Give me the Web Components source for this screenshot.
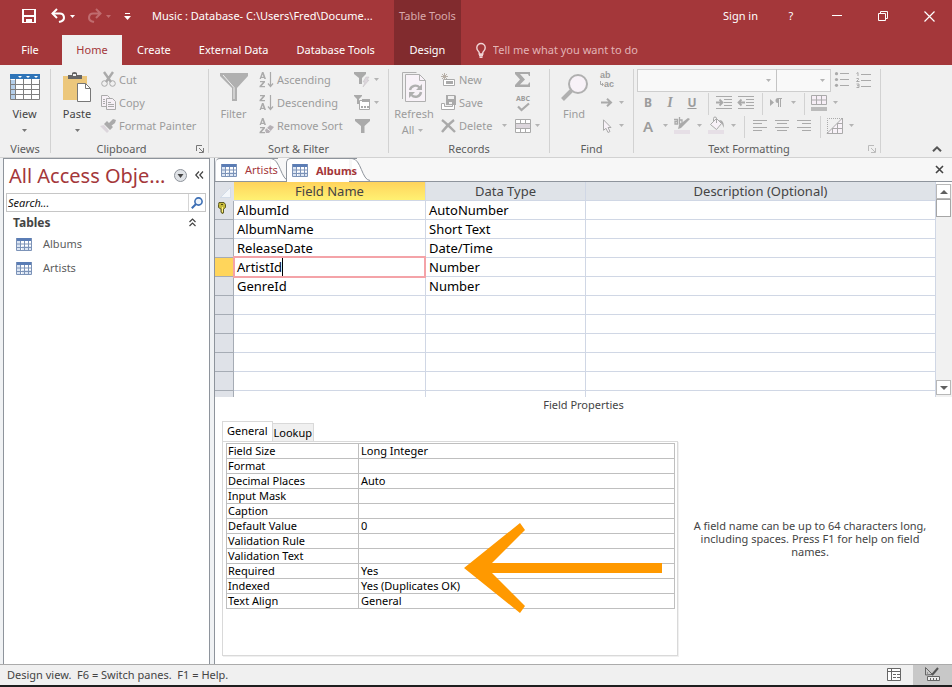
<!DOCTYPE html>
<html lang="en">
<head>
<meta charset="utf-8">
<title>Music : Database</title>
<style>
  html, body { height: 100%; margin: 0; }
  body { font: 11px/16px "Noto Sans", "Open Sans", sans-serif; color: #444; background: #fff; }
</style>
</head>
<body>
<access-app></access-app>

<script>
// [width, height, markup]
const ICONS = {
  save: [14, 14, '<path fill="currentColor" fill-rule="evenodd" d="M0 0h14v14H0zM2 1v5h10V1zM2 8v5h2v-3h6v3h2V8z"/><path fill="currentColor" d="M5 11h2v2H5z"/>'],
  undo: [15, 14, '<path fill="none" stroke="currentColor" stroke-width="2" d="M1.500 4.500H9a4 4 0 0 1 1.500 7.700L8 13"/><path fill="none" stroke="currentColor" stroke-width="2" d="M6 0L1.500 4.500 6 9"/>'],
  redo: [15, 14, '<path fill="none" stroke="currentColor" stroke-width="2" d="M13.500 4.500H6a4 4 0 0 0-1.500 7.700L7 13M9 0l4.500 4.500L9 9"/>'],
  customize: [7, 8, '<path fill="currentColor" d="M1 0h5v1H1zM0 3h7L3.500 7z"/>'],
  caret: [5, 3, '<path fill="currentColor" d="M0 0h5L2.500 3z"/>'],
  minimize: [10, 10, '<path fill="currentColor" d="M0 4h10v1H0z"/>'],
  restore: [10, 10, '<path fill="none" stroke="currentColor" d="M.5 2.500h7v7h-7zM2.500 2V.5h7v7H8"/>'],
  close: [11, 11, '<path fill="none" stroke="currentColor" stroke-width="1.200" d="M.5.5l10 10M10.500.5l-10 10"/>'],
  closeDoc: [9, 9, '<path fill="none" stroke="currentColor" stroke-width="1.600" d="M1 1l7 7M8 1L1 8"/>'],
  bulb: [10, 15, '<path fill="none" stroke="currentColor" stroke-width="1.400" d="M3.200 11V9.500C2.500 8 .8 7.200.8 4.700a4.200 4.200 0 0 1 8.400 0c0 2.500-1.700 3.300-2.400 4.800V11zM3 12.500h4M3.500 14.300h3"/>'],
  view: [30, 26, '<path fill="#fff" d="M0 0h30v26H0z"/><path fill="#2e74b8" d="M0 0h30v5H0z"/><path fill="#b5cfea" d="M1 6h4v19H1z"/><path fill="#fff" d="M8 2h4l-2 2zM16 2h4l-2 2zM24 2h4l-2 2z"/><path fill="none" stroke="#7f7f7f" d="M.5 5.500v20h29v-20M5.500 5v20M13.500 5v20M21.500 5v20M0 10.500h30M0 15.500h30M0 20.500h30"/>'],
  paste: [28, 30, '<path fill="#ecc77c" d="M0 4h24v24H0z"/><path fill="#666" d="M5 3h4V1a3 2 0 0 1 5 0v2h5v4H5z"/><path fill="#f0f0f0" d="M10 2h3v2h-3z"/><path fill="#fff" stroke="#777" d="M14.500 11.500h8l5 5v13h-13z"/><path fill="none" stroke="#777" d="M22.500 11.500v5h5"/>'],
  cut: [15, 15, '<g fill="none" stroke="#aaa"><path stroke-width="2.400" d="M3 0l7 10M12 0L5 10"/><circle cx="3.500" cy="11.500" r="2.800"/><circle cx="11.500" cy="11.500" r="2.800"/></g>'],
  copy: [15, 15, '<g fill="#f6f0f6" stroke="#aaa"><path d="M.5.500h6l2 2v9h-8z"/><path d="M5.500 3.500h6l3 3v8h-9z"/><path d="M2 4.500h2M2 6.500h2M2 8.500h2M7 7.500h3M7 9.500h6M7 11.500h6"/></g>'],
  painter: [16, 14, '<path fill="#dcd6dc" d="M0 7l4-1 5 6-2 2z"/><path fill="#aaa" d="M4 5l3-3 6 6-3 3zM9 4l4-4 3 1-1 3-4 3z"/>'],
  filter: [28, 28, '<path fill="#b0b0b0" d="M0 0h28v3L17 15v13h-5V15L0 3z"/><path fill="none" stroke="#f0f0f0" d="M3 2l11 12.500V26"/>'],
  sortAsc: [15, 16, '<path fill="#aaa" d="M3 0h1.500L7 7H5.300L5 6H2.200L2 7H.5zM3.600 2.500L2.800 4.800h1.700zM1 9h5v1.200L2.800 14H6v1.300H.5v-1.200L3.800 10.300H1z"/><path fill="none" stroke="#aaa" stroke-width="1.200" d="M11.500 0v14M9 11.500l2.500 3 2.500-3"/>'],
  sortDesc: [15, 16, '<path fill="#aaa" d="M1 0h5v1.200L2.800 5H6v1.300H.5V5.100L3.800 1.300H1zM3 8h1.500L7 15H5.300L5 14H2.200L2 15H.5zM3.600 10.500l-.8 2.300h1.700z"/><path fill="none" stroke="#aaa" stroke-width="1.200" d="M11.500 0v14M9 11.500l2.500 3 2.500-3"/>'],
  sortClear: [15, 16, '<path fill="#aaa" d="M3 0h1.500L7 7H5.300L5 6H2.200L2 7H.5zM3.600 2.500L2.800 4.800h1.700zM1 9h5v1.200L2.800 14H6v1.300H.5v-1.200L3.800 10.300H1z"/><path fill="#b5b0b5" d="M6 12l5-5 4 2-5 6H7z"/><path stroke="#f0f0f0" d="M7.500 10l4 3"/>'],
  selection: [16, 15, '<path fill="#aaa" d="M0 0h12v2L8 6v6H5V6L0 2z"/><path fill="#dcd6dc" stroke="#c4c0c4" stroke-width=".5" d="M12 5h3l-2 3h2l-6 7 2-5H9z"/>'],
  advanced: [17, 16, '<path fill="#fff" stroke="#aaa" d="M5.500 5.500h10v9h-10z"/><path fill="#aaa" d="M0 0h8v1L5 4v5H3V4L0 1zM8 4h8v3H8zM7 11h2v2H7zM10 11h2v2h-2zM13 11h2v2h-2z"/>'],
  toggleFilter: [15, 14, '<path fill="#aaa" d="M0 0h15v2L9.500 7v7H6V7L0 2z"/>'],
  refresh: [24, 30, '<path fill="none" stroke="#b0b0b0" d="M.5 27V.5h14"/><path fill="#f8f2f8" stroke="#b0b0b0" d="M3.500 2.500h14l6 6v21h-20z"/><path fill="none" stroke="#b0b0b0" d="M17.500 2.500v6h6"/><g fill="none" stroke="#b0b0b0" stroke-width="2.400"><path d="M8 18a5.500 5.500 0 0 1 9.500-2.500M19 20a5.500 5.500 0 0 1-9.500 3"/></g><path fill="#b0b0b0" d="M20 12v6h-6zM7 26v-6h6z"/>'],
  newRecord: [15, 14, '<path fill="#fff" stroke="#aaa" d="M2.500 6.500h11v6h-11z"/><path fill="#aaa" d="M5 8h7v3H5z"/><path stroke="#b8b0a8" d="M3.500 0v7M0 3.500h7M1 1l5 5M6 1L1 6"/>'],
  saveRecord: [15, 15, '<path fill="#fff" stroke="#aaa" d="M.5 8.500h3v3h8v-2h2v5h-13z"/><path fill="#aaa" fill-rule="evenodd" d="M5 0h9l1 1v9H5zM7 1v3h6V1zM8 7v2h3V7z"/>'],
  remove: [15, 14, '<path fill="none" stroke="#aaa" stroke-width="2.400" d="M1 1c4 3 9 8 13 12M13 1C9 4 4 9 1 13"/>'],
  sigma: [16, 15, '<path fill="#aaa" d="M0 0h15v4h-1l-1-2H5l5 5.500-5 5h8l1-2h1V15H0v-2l5-5.500-5-5.500z"/>'],
  check: [13, 8, '<path fill="none" stroke="#aaa" stroke-width="2.200" d="M1 3.500L4.500 7 12 .5"/>'],
  more: [16, 14, '<path fill="#fff" stroke="#aaa" d="M.5.5h15v13H.5z"/><path fill="#dcd6dc" d="M1 5h14v4H1z"/><path stroke="#aaa" d="M1 4.500h14M1 9.500h14M5.500 0v4M10.500 0v4M5.500 10v4M10.500 10v4"/>'],
  find: [27, 27, '<circle cx="17" cy="10" r="9" fill="#f8f2f8" stroke="#b0b0b0" stroke-width="2"/><path stroke="#b0b0b0" stroke-width="4" d="M10.500 16.500L1.500 25.500"/>'],
  hook: [4, 6, '<path fill="none" stroke="#aaa" d="M.5 0v3.500H3M2 2l1.500 1.500L2 5"/>'],
  goTo: [12, 9, '<path fill="none" stroke="#aaa" stroke-width="2" d="M0 4.500h10M6 .8l4 3.700-4 3.700"/>'],
  pointer: [9, 14, '<path fill="#f8f2f8" stroke="#aaa" d="M.5.800v10.500l2.500-2 2 4.200 2-1-2-4h3z"/>'],
  bullets: [14, 15, '<g fill="#aaa"><circle cx="1.500" cy="1.700" r="1.600"/><circle cx="1.500" cy="7.500" r="1.600"/><circle cx="1.500" cy="13.300" r="1.600"/><path d="M5 1h9v1H5zM5 7h9v1H5zM5 13h9v1H5z"/></g>'],
  numbers: [16, 16, '<g fill="none" stroke="#aaa"><path d="M.5 1.500L2 .5V4M.5 6.500h2v1l-2 2h3M.5 12h2.500v3.500H.5M1 13.700h2"/><path d="M5 2.500h10M5 8.500h10M5 14.500h10"/></g>'],
  indent: [16, 14, '<path stroke="#aaa" d="M0 .5h16M0 12.500h16M8 3.500h8M8 6.500h8M8 9.500h8"/><path fill="none" stroke="#aaa" stroke-width="1.800" d="M0 6.500h6M3.500 3.500l3 3-3 3"/>'],
  outdent: [16, 14, '<path stroke="#aaa" d="M0 .5h16M0 12.500h16M8 3.500h8M8 6.500h8M8 9.500h8"/><path fill="none" stroke="#aaa" stroke-width="1.800" d="M7 6.500H1M3.500 3.500l-3 3 3 3"/>'],
  direction: [14, 10, '<path fill="#aaa" d="M0 1l4 3.500L0 8zM12 0v1h-1v8h-1V1H9v8H8V5a2.500 2.500 0 0 1 0-5z"/>'],
  gridlines: [16, 16, '<path fill="#f6eef6" stroke="#aaa" d="M.5.5h15v9H.5zM0 5h16M5.500 0v9M10.500 0v9"/><path fill="#bbb" d="M0 12h16v4H0z"/>'],
  highlight: [17, 17, '<path fill="#e6dfe6" d="M0 13h16v4H0z"/><path fill="#aaa" d="M4 12l1-4L14 1l2 1-9 9z"/><g fill="none" stroke="#aaa" stroke-width="1.300"><path d="M0 2.500h3.500V7H1V4.500h2.500M5.500 0v7H8V3H6"/></g>'],
  fill: [17, 17, '<path fill="#e6dfe6" d="M0 13h16v4H0z"/><path fill="#f8f2f8" stroke="#aaa" d="M2.500 7.500l6-6 5 5-5 6z"/><path fill="none" stroke="#aaa" d="M5.500 5V1.500a1.500 1.500 0 0 1 3 0V6"/><path fill="#aaa" d="M11 3c4 0 5 3 5 8l-2-4z"/>'],
  left: [14, 12, '<path stroke="#aaa" d="M0 .5h14M0 3.500h9M0 7.500h14M0 10.500h9"/>'],
  center: [14, 12, '<path stroke="#aaa" d="M0 .5h14M2 3.500h10M0 7.500h14M2 10.500h10"/>'],
  right: [14, 12, '<path stroke="#aaa" d="M0 .5h14M5 3.500h9M0 7.500h14M5 10.500h9"/>'],
  altFill: [16, 16, '<path fill="#f8f2f8" stroke="#aaa" d="M15.500 0v15.500H0zM5.500 10v5M10.500 5v10M5 10.500h10M10 5.500h5"/><path fill="none" stroke="#aaa" stroke-dasharray="1 1" d="M.5 15V.5H15"/>'],
  launcher: [8, 8, '<path fill="none" stroke="currentColor" d="M.5 6V.5H6M3 3l4 4M7.500 3v4.500H3"/>'],
  chevronUp: [10, 6, '<path fill="none" stroke="#555" stroke-width="2" d="M1 5.300l4-4 4 4"/>'],
  round: [13, 13, '<circle cx="6.500" cy="6.500" r="6" fill="#dfe2e6" stroke="#8f949c"/><path fill="#444" d="M3.500 5h6l-3 4z"/>'],
  shutter: [9, 8, '<path fill="none" stroke="#444" stroke-width="1.200" d="M4 .5L.8 4 4 7.500M8 .5L4.800 4 8 7.500"/>'],
  collapse: [7, 9, '<path fill="none" stroke="#444" stroke-width="1.200" d="M.5 4l3-3 3 3M.5 8l3-3 3 3"/>'],
  search: [12, 12, '<circle cx="7.500" cy="4.500" r="3.600" fill="#eef4fb" stroke="#3c6eb4" stroke-width="1.600"/><path stroke="#3c6eb4" stroke-width="2" d="M5 7L.8 11.200"/>'],
  table: [16, 13, '<path fill="#fff" d="M0 0h16v13H0z"/><path fill="#5b7db5" d="M0 0h16v3H0z"/><path fill="#dbe5f3" d="M1 3h3v9H1zM6 8h9v4H6z"/><path fill="none" stroke="#7c93b8" d="M.5 0v12.500h15V0M4.500 3v10M8.500 3v10M12.500 3v10M0 6h16M0 9.500h16"/>'],
  key: [8, 12, '<path fill="#c5b93c" stroke="#5d5a27" d="M1 .5h5l1.500 2v3L5.500 7v4L4 11.500 3 10V7L.5 5.500v-3z"/><path fill="#4d4a17" d="M3 2h2v1H3z"/><path stroke="#fff08a" d="M4.500 5v5"/>'],
  corner: [11, 11, '<path fill="#f3f6fa" stroke="#c5d2e2" stroke-width=".6" d="M10.500.5v10H.5z"/>'],
  triUp: [8, 4, '<path fill="#606060" d="M0 4h8L4 0z"/>'],
  triDown: [8, 4, '<path fill="#606060" d="M0 0h8L4 4z"/>'],
  datasheet: [14, 13, '<path fill="#fff" stroke="#666" d="M.5.5h13v12H.5zM0 3.500h14M4.500 0v13"/><path stroke="#666" stroke-dasharray="3 1" d="M6 6.500h7M6 9.500h7"/>'],
  design: [15, 14, '<path fill="none" stroke="#666" d="M.5 8V.5l7 7zM2.500 5.500v1"/><path fill="none" stroke="#555" stroke-width="2" d="M7 8l6-7"/><path fill="#eee" stroke="#666" d="M2.500 9.500h12v4h-12zM5.500 11v2M8.500 11v2M11.500 11v2"/>'],
  arrow: [198, 90, '<path fill="#f90" d="M0 45L56 0l5 7-33 33h170v10H28l33 33-5 7z"/>'],
  tabSlope: [18, 23, '<path fill="#fff" d="M0 0C9 0 10 23 18 23H0z"/><path fill="none" stroke="#8e949c" d="M0 .5c9 0 10 22 18 22"/>']
}

const define = (name, html, setup) => {
  const template = document.createElement('template')
  template.innerHTML = html
  customElements.define(name, class extends HTMLElement {
    constructor () {
      super()
      this.attachShadow({ mode: 'open' }).append(template.content.cloneNode(true))
    }

    connectedCallback () {
      if (setup) setup(this, this.shadowRoot)
    }
  })
}

const icon = name => `<ui-icon name="${name}"></ui-icon>`

define('ui-icon', `
  <style>
    :host { display: inline-flex; flex: none; }
    svg { display: block; overflow: visible; }
  </style>
  <span></span>
`, (el, root) => {
  const [w, h, markup] = ICONS[el.getAttribute('name')]
  root.querySelector('span').innerHTML =
    `<svg width="${w}" height="${h}" viewBox="0 0 ${w} ${h}" aria-hidden="true">${markup}</svg>`
})

/* ---------- ribbon ---------- */

// attributes: icon, label, size (large | small | tool), drop, line2, off
define('ribbon-button', `
  <style>
    :host { display: block; flex: none; }
    button { display: flex; align-items: center; box-sizing: border-box; width: 100%; height: 23px; margin: 0; padding: 0 0 2px;
      border: 0; background: none; font: inherit; color: #444; white-space: nowrap; }
    button:disabled { color: #9c9c9c; }
    .icon { display: flex; flex-direction: column; align-items: center; justify-content: center; width: 16px; line-height: 8px; }
    .drop { display: flex; align-items: center; justify-content: center; width: 12px; color: #777; }
    :disabled .drop { color: #b4b4b4; }
    .label:empty { display: none; }
    .small .label { margin-left: 3px; }
    .push .label { flex: 1; text-align: left; }
    .tool { justify-content: center; }
    .tool .icon { flex: 1; }
    .large { flex-direction: column; height: 69px; padding: 3px 0 0; }
    .large .icon { height: 30px; width: auto; margin-bottom: 4px; }
    .large .line2 { display: flex; height: 16px; align-items: center; }
  </style>
  <button type="button"><span class="icon"><slot></slot></span><span class="label"></span></button>
`, (el, root) => {
  const button = root.querySelector('button')
  const size = el.getAttribute('size') || 'small'
  button.className = size + (el.hasAttribute('push') ? ' push' : '')
  button.disabled = el.hasAttribute('off')
  root.querySelector('.label').textContent = el.getAttribute('label') || ''
  if (el.hasAttribute('aria-label')) button.setAttribute('aria-label', el.getAttribute('aria-label'))
  if (el.hasAttribute('icon')) root.querySelector('.icon').innerHTML = icon(el.getAttribute('icon'))
  const drop = el.hasAttribute('drop') ? `<span class="drop">${icon('caret')}</span>` : ''
  if (size === 'large') {
    button.insertAdjacentHTML('beforeend', `<span class="line2">${el.getAttribute('line2') || ''}${drop}</span>`)
  } else {
    button.insertAdjacentHTML('beforeend', drop)
  }
})

define('ribbon-group', `
  <style>
    :host { display: flex; flex-direction: column; flex: none;
      background: linear-gradient(#d2d2d2, #d2d2d2) right top / 1px 84px no-repeat; }
    .body { display: flex; height: 69px; }
    footer { display: flex; padding: 3px 1px 0 0; height: 16px; color: #5c5c5c; }
    .name { flex: 1; text-align: center; }
    button { display: flex; align-items: center; justify-content: center; width: 16px; padding: 0; border: 0;
      background: none; color: #777; }
    button:disabled { color: #bbb; }
  </style>
  <div class="body"><slot></slot></div>
  <footer><span class="name"></span></footer>
`, (el, root) => {
  root.querySelector('.name').textContent = el.getAttribute('label')
  const launcher = el.getAttribute('launcher')
  if (launcher) {
    root.querySelector('footer').insertAdjacentHTML('beforeend',
      `<button type="button" aria-label="${el.getAttribute('label')} options" ${launcher === 'off' ? 'disabled' : ''}>${icon('launcher')}</button>`)
  }
})

define('font-toolbar', `
  <style>
    :host { display: block; }
    .row { display: flex; align-items: center; height: 23px; padding-left: 3px; }
    .row:first-child { padding-left: 5px; }
    .combo { display: flex; align-items: center; position: relative; }
    .combo + .combo { margin-left: -1px; }
    select { appearance: none; box-sizing: border-box; width: 140px; height: 23px; border: 1px solid #c0c0c0;
      border-radius: 0; background: #fdfdfd; }
    .combo + .combo select { width: 55px; }
    .combo ui-icon { position: absolute; right: 6px; color: #b4b4b4; }
    ribbon-button { width: 22px; }
    ribbon-button[drop] { width: 34px; }
    ribbon-button.tight { width: 32px; }
    i.sep { width: 1px; height: 22px; margin: 0 4px 0 5px; background: #d2d2d2; }
    b, em, u { font-size: 12px; font-weight: 700; line-height: 16px; }
    .a { font-size: 15px; line-height: 18px; font-weight: 600; }
    em { font-family: "Liberation Serif", serif; font-size: 14px; }
  </style>
  <div class="row">
    <span class="combo"><select aria-label="Font" disabled></select>${icon('caret')}</span>
    <span class="combo"><select aria-label="Font size" disabled></select>${icon('caret')}</span>
    <ribbon-button size="tool" off icon="bullets" aria-label="Bullets"></ribbon-button>
    <ribbon-button size="tool" off icon="numbers" aria-label="Numbering"></ribbon-button>
  </div>
  <div class="row">
    <ribbon-button size="tool" off aria-label="Bold"><b>B</b></ribbon-button>
    <ribbon-button size="tool" off aria-label="Italic"><em>I</em></ribbon-button>
    <ribbon-button size="tool" off aria-label="Underline"><u>U</u></ribbon-button>
    <i class="sep"></i>
    <ribbon-button size="tool" off icon="indent" aria-label="Increase indent"></ribbon-button>
    <ribbon-button size="tool" off icon="outdent" aria-label="Decrease indent"></ribbon-button>
    <i class="sep"></i>
    <ribbon-button class="tight" size="tool" off drop icon="direction" aria-label="Text direction"></ribbon-button>
    <i class="sep"></i>
    <ribbon-button class="tight" size="tool" off drop icon="gridlines" aria-label="Gridlines"></ribbon-button>
  </div>
  <div class="row">
    <ribbon-button size="tool" off drop aria-label="Font color"><span class="a">A</span></ribbon-button>
    <ribbon-button size="tool" off drop icon="highlight" aria-label="Highlight"></ribbon-button>
    <ribbon-button size="tool" off drop icon="fill" aria-label="Background color"></ribbon-button>
    <i class="sep"></i>
    <ribbon-button size="tool" off icon="left" aria-label="Align left"></ribbon-button>
    <ribbon-button size="tool" off icon="center" aria-label="Center"></ribbon-button>
    <ribbon-button size="tool" off icon="right" aria-label="Align right"></ribbon-button>
    <i class="sep"></i>
    <ribbon-button class="tight" size="tool" off drop icon="altFill" aria-label="Alternate row color"></ribbon-button>
  </div>
`)

define('ribbon-bar', `
  <style>
    :host { display: flex; padding-top: 4px; background: #f0f0f0; border-bottom: 1px solid #d2d2d2; }
    .col { display: flex; flex-direction: column; }
    .views { width: 51px; }
    .clip { width: 158px; }
    .sort { width: 180px; }
    .records { width: 161px; }
    .find { width: 84px; }
    .text { width: 247px; }
    .clip [size=large] { width: 42px; margin-left: 5px; }
    .clip .col { margin-left: 2px; }
    .views [size=large] { width: 49px; }
    .sort [size=large] { width: 49px; }
    .sort .col + .col { margin-left: auto; padding-right: 7px; }
    .records [size=large] { width: 50px; }
    .records .col { width: 70px; margin-left: 1px; }
    .records .col + .col { width: auto; margin-left: 5px; }
    .find [size=large] { width: 48px; }
    .find .col { margin-left: 1px; }
    .abc { font-size: 7px; font-weight: 700; }
    .swap { display: flex; flex-direction: column; font: 700 9px/8px "Liberation Sans", sans-serif; }
    .swap span { display: flex; align-items: center; height: 9px; }
    .up { display: flex; flex: 1; align-items: flex-end; justify-content: flex-end; }
    .up button { display: flex; align-items: center; justify-content: center; width: 30px; height: 16px; padding: 0;
      border: 0; background: none; }
  </style>
  <ribbon-group class="views" label="Views">
    <ribbon-button size="large" label="View" icon="view" drop></ribbon-button>
  </ribbon-group>
  <ribbon-group class="clip" label="Clipboard" launcher="on">
    <ribbon-button size="large" label="Paste" icon="paste" drop></ribbon-button>
    <div class="col">
      <ribbon-button label="Cut" icon="cut" off></ribbon-button>
      <ribbon-button label="Copy" icon="copy" off></ribbon-button>
      <ribbon-button label="Format Painter" icon="painter" off></ribbon-button>
    </div>
  </ribbon-group>
  <ribbon-group class="sort" label="Sort &amp; Filter">
    <ribbon-button size="large" label="Filter" icon="filter" off></ribbon-button>
    <div class="col">
      <ribbon-button label="Ascending" icon="sortAsc" off></ribbon-button>
      <ribbon-button label="Descending" icon="sortDesc" off></ribbon-button>
      <ribbon-button label="Remove Sort" icon="sortClear" off></ribbon-button>
    </div>
    <div class="col">
      <ribbon-button icon="selection" drop off aria-label="Selection"></ribbon-button>
      <ribbon-button icon="advanced" drop off aria-label="Advanced"></ribbon-button>
      <ribbon-button icon="toggleFilter" off aria-label="Toggle filter"></ribbon-button>
    </div>
  </ribbon-group>
  <ribbon-group class="records" label="Records">
    <ribbon-button size="large" label="Refresh" line2="All" icon="refresh" drop off></ribbon-button>
    <div class="col">
      <ribbon-button label="New" icon="newRecord" off></ribbon-button>
      <ribbon-button label="Save" icon="saveRecord" off></ribbon-button>
      <ribbon-button label="Delete" icon="remove" drop push off></ribbon-button>
    </div>
    <div class="col">
      <ribbon-button icon="sigma" off aria-label="Totals"></ribbon-button>
      <ribbon-button off aria-label="Spelling"><span class="abc">ABC</span>${icon('check')}</ribbon-button>
      <ribbon-button icon="more" drop off aria-label="More"></ribbon-button>
    </div>
  </ribbon-group>
  <ribbon-group class="find" label="Find">
    <ribbon-button size="large" label="Find" icon="find" off></ribbon-button>
    <div class="col">
      <ribbon-button off aria-label="Replace"><span class="swap"><span>ab</span><span>${icon('hook')}ac</span></span></ribbon-button>
      <ribbon-button icon="goTo" drop off aria-label="Go to"></ribbon-button>
      <ribbon-button icon="pointer" drop off aria-label="Select"></ribbon-button>
    </div>
  </ribbon-group>
  <ribbon-group class="text" label="Text Formatting" launcher="off">
    <font-toolbar></font-toolbar>
  </ribbon-group>
  <div class="up"><button type="button" aria-label="Collapse the ribbon">${icon('chevronUp')}</button></div>
`)

/* ---------- title bar and ribbon tabs ---------- */

define('title-bar', `
  <style>
    :host { display: grid; grid-template: 35px 30px / 394px auto 1fr; background: #a4373a; color: #fff; }
    button { display: flex; align-items: center; justify-content: center; margin: 0; padding: 0; border: 0;
      background: none; color: inherit; font: inherit; white-space: nowrap; }
    .quick, .tabs, .window, .tell { display: flex; align-items: center; }
    .quick, .window { padding-bottom: 3px; }
    .quick { padding-left: 18px; }
    .quick button { width: 22px; height: 24px; }
    .quick .drop { width: 8px; }
    .quick .undo, .quick .redo { margin-left: 8px; width: 20px; }
    .quick .faded { color: #c06c6f; }
    .quick .more { margin: 2px 0 0 4px; }
    h1 { margin: 0 0 0 14px; font: inherit; }
    .context { display: flex; align-items: center; justify-content: center; padding: 0 5px 3px; background: #812b2e; color: #d8a9ab; }
    .tabs { gap: 2px; align-items: stretch; }
    .tabs button { padding: 0 13px; }
    .tabs .file { width: 60px; }
    .tabs .active { background: #f0f0f0; color: #a4373a; width: 60px; }
    .design { background: #812b2e; }
    .window { justify-content: flex-end; }
    .window button { width: 46px; height: 32px; }
    .window .sign { width: auto; margin-right: 10px; }
    .tell { gap: 7px; padding-left: 15px; color: #f0d4d5; }
    input { flex: 1; max-width: 300px; padding: 0; border: 0; outline: 0; background: none; font: inherit; color: #fff; }
    input::placeholder { color: #e2b4b6; opacity: 1; }
  </style>
  <div class="quick">
    <button type="button" aria-label="Save">${icon('save')}</button>
    <button type="button" class="undo" aria-label="Undo">${icon('undo')}</button>
    <button type="button" class="drop" aria-label="Undo list">${icon('caret')}</button>
    <button type="button" class="redo faded" aria-label="Redo">${icon('redo')}</button>
    <button type="button" class="drop faded" aria-label="Redo list">${icon('caret')}</button>
    <button type="button" class="more" aria-label="Customize toolbar">${icon('customize')}</button>
    <h1>Music : Database- C:\\Users\\Fred\\Docume...</h1>
  </div>
  <div class="context">Table Tools</div>
  <div class="window">
    <button type="button" class="sign">Sign in</button>
    <button type="button">?</button>
    <button type="button" aria-label="Minimize">${icon('minimize')}</button>
    <button type="button" aria-label="Restore">${icon('restore')}</button>
    <button type="button" aria-label="Close">${icon('close')}</button>
  </div>
  <nav class="tabs">
    <button type="button" class="file">File</button>
    <button type="button" class="active">Home</button>
    <button type="button">Create</button>
    <button type="button">External Data</button>
    <button type="button">Database Tools</button>
  </nav>
  <button type="button" class="design">Design</button>
  <label class="tell">${icon('bulb')}<input type="text" aria-label="Tell me what you want to do" placeholder="Tell me what you want to do"></label>
`)

/* ---------- navigation pane ---------- */

define('nav-item', `
  <style>
    :host { display: block; }
    a { display: flex; align-items: center; gap: 11px; height: 24px; padding-left: 12px; color: #5c5c5c; text-decoration: none; }
  </style>
  <a href="#">${icon('table')}<slot></slot></a>
`)

define('nav-pane', `
  <style>
    :host { display: block; width: 205px; margin-left: 3px; border: solid #8e949c; border-width: 1px 1px 0; background: #fff; }
    header { display: flex; align-items: center; height: 34px; padding: 0 0 0 5px; }
    h2 { flex: 1; margin: 0; font-size: 20px; font-weight: 400; line-height: 36px; color: #a4373a; white-space: nowrap; }
    h3 { flex: 1; margin: 0; font-size: 12px; line-height: 18px; color: #444; }
    button { display: flex; align-items: center; justify-content: center; width: 19px; height: 18px; padding: 0 0 2px; border: 0; background: none; }
    .search { display: flex; margin: 0 3px 1px 2px; border: 1px solid #c6c6c6; }
    .search button { border-left: 1px solid #d5d5d5; width: 17px; height: 17px; padding: 0; }
    input { flex: 1; min-width: 0; padding: 0 1px; border: 0; outline: 0; font: inherit; font-style: italic; }
    input::placeholder { color: #111; opacity: 1; }
    .group { display: flex; align-items: center; height: 19px; padding: 0 7px 0 9px; }
    .group button { padding: 0; }
  </style>
  <header><h2>All Access Obje...</h2>
    <button type="button" aria-label="Choose category">${icon('round')}</button>
    <button type="button" aria-label="Close pane">${icon('shutter')}</button>
  </header>
  <div class="search">
    <input type="text" aria-label="Search" placeholder="Search...">
    <button type="button" aria-label="Search">${icon('search')}</button>
  </div>
  <div class="group"><h3>Tables</h3><button type="button" aria-label="Collapse tables">${icon('collapse')}</button></div>
  <nav><slot></slot></nav>
`)

/* ---------- document area ---------- */

define('doc-tabs', `
  <style>
    :host { display: flex; box-sizing: border-box; height: 24px; background: #f7f7f7; border-bottom: 1px solid #8e949c; }
    button { display: flex; height: 23px; margin: 0; padding: 0; border: 0; background: none; font: inherit; color: #a4373a; isolation: isolate; }
    .face { display: flex; align-items: center; gap: 8px; box-sizing: border-box; height: 23px; padding-left: 5px;
      border: solid #8e949c; border-width: 1px 0 0 1px; border-radius: 5px 0 0 0;
      background: linear-gradient(#fff, #fff) 0 0 / calc(100% - 8px) 100% no-repeat; }
    .back .face { border-left-color: #d0d4da; }
    .front { position: relative; height: 24px; margin-left: -3px; font-weight: 700; }
    .front .face { height: 24px; }
    button > ui-icon { z-index: -1; }
    .back > ui-icon { margin-left: -7px; }
    .front > ui-icon { margin-left: -5px; }
    .close { margin: 0 0 0 auto; width: 25px; align-items: center; justify-content: center; color: #444; }
  </style>
  <button type="button" class="back"><span class="face">${icon('table')}Artists</span>${icon('tabSlope')}</button>
  <button type="button" class="front"><span class="face">${icon('table')}Albums</span>${icon('tabSlope')}</button>
  <button type="button" class="close" aria-label="Close table">${icon('closeDoc')}</button>
`)

define('field-grid', `
  <style>
    :host { display: flex; overflow: hidden; color: #000; font-size: 13px; }
    .sheet { flex: 1; min-width: 0; }
    table { width: 100%; table-layout: fixed; border-spacing: 0; }
    col.mark { width: 19px; }
    col.name { width: 192px; }
    col.type { width: 160px; }
    th, td { box-sizing: border-box; height: 19px; padding: 0 3px; border: solid #d0d7e5; border-width: 0 1px 1px 0;
      line-height: 18px; font-weight: 400; text-align: left; white-space: nowrap; }
    thead th { background: #dfe3e8; color: #444; text-align: center; }
    thead th.current { background: linear-gradient(#ffd35c, #fff172); }
    tbody th, thead th:first-child { padding: 0; background: #dfe2e8; border-color: #a6acb5; }
    thead th:first-child { border-bottom-color: #dfe2e8; border-right-color: #dfe2e8; }
    th ui-icon { display: flex; justify-content: center; }
    thead th ui-icon { margin-top: 3px; margin-left: 2px; }
    tbody th ui-icon { margin: 0 4px 4px 0; }
    .active th { background: #ffd55b; }
    .active .edit { position: relative; }
    .edit::after { content: ""; position: absolute; inset: -2px -1px -2px -1px; border: 2px solid #f4a3a8; pointer-events: none; }
    .edit span { display: inline-block; height: 18px; border-right: 1px solid #000; vertical-align: top; outline: 0; }
    .scroll { display: flex; flex-direction: column; width: 16px; margin-top: 2px; background: #f1f1f1; }
    .scroll button { display: flex; align-items: center; justify-content: center; flex: none; box-sizing: border-box; width: 15px; height: 15px;
      padding: 0; border: 1px solid #b8b8b8; background: #fff; }
    .scroll .thumb { height: 18px; border-color: #a6a6a6; }
    .scroll .down { margin: auto 0 2px; }
  </style>
  <div class="sheet">
    <table>
      <colgroup><col class="mark"><col class="name"><col class="type"><col></colgroup>
      <thead><tr><th>${icon('corner')}</th><th class="current">Field Name</th><th>Data Type</th><th>Description (Optional)</th></tr></thead>
      <tbody></tbody>
    </table>
  </div>
  <div class="scroll">
    <button type="button" aria-label="Scroll up">${icon('triUp')}</button>
    <button type="button" class="thumb" aria-label="Scroll position"></button>
    <button type="button" class="down" aria-label="Scroll down">${icon('triDown')}</button>
  </div>
`, (el, root) => {
  const fields = [
    ['AlbumId', 'AutoNumber'],
    ['AlbumName', 'Short Text'],
    ['ReleaseDate', 'Date/Time'],
    ['ArtistId', 'Number'],
    ['GenreId', 'Number']
  ]
  let rows = ''
  for (let i = 0; i < 11; i++) {
    const [name, type] = fields[i] || ['', '']
    const active = name === 'ArtistId'
    rows += `<tr${active ? ' class="active"' : ''}><th>${i === 0 ? icon('key') : ''}</th>` +
      (active ? `<td class="edit"><span contenteditable="true" role="textbox" spellcheck="false" aria-label="Field name">${name}</span></td>` : `<td>${name}</td>`) +
      `<td>${type}</td><td></td></tr>`
  }
  root.querySelector('tbody').innerHTML = rows
})

define('field-properties', `
  <style>
    :host { display: flex; flex-direction: column; background: #fff; color: #000; }
    h2 { margin: 0 0 8px; font: inherit; color: #444; text-align: center; }
    .body { display: flex; flex: 1; margin: 0 0 8px 7px; }
    .pane { display: flex; flex-direction: column; flex: 0 0 456px; }
    .tabs { display: flex; align-items: flex-end; height: 20px; }
    .tabs button { box-sizing: border-box; height: 18px; padding: 0 1px; border: 1px solid #d9d9d9; border-width: 1px 1px 0 0; background: #f0f0f0;
      font: inherit; color: #000; }
    .tabs .on { height: 21px; margin-bottom: -1px; padding: 0 4px 2px; border-left-width: 1px; background: #fff; position: relative; }
    .sheet { position: relative; flex: 1; padding: 1px 2px 1px 3px; border: 1px solid #d9d9d9; box-shadow: 1px 1px #f0f0f0; }
    table { width: 100%; border-collapse: collapse; table-layout: fixed; }
    th, td { box-sizing: border-box; height: 15px; padding: 0 2px; border: 1px solid #bfbfbf; line-height: 14px; font-weight: 400; text-align: left; }
    th { width: 132px; padding: 0 1px; }
    .arrow { position: absolute; left: 53%; top: 81px; }
    p { flex: 1; align-self: center; margin: 0; padding: 0 20px 0 10px; line-height: 13px; color: #444; text-align: center; }
  </style>
  <h2>Field Properties</h2>
  <div class="body">
    <div class="pane">
      <div class="tabs"><button type="button" class="on">General</button><button type="button">Lookup</button></div>
      <div class="sheet"><table><tbody></tbody></table><span class="arrow">${icon('arrow')}</span></div>
    </div>
    <p>A field name can be up to 64 characters long, including spaces. Press F1 for help on field names.</p>
  </div>
`, (el, root) => {
  const props = {
    'Field Size': 'Long Integer',
    'Format': '',
    'Decimal Places': 'Auto',
    'Input Mask': '',
    'Caption': '',
    'Default Value': '0',
    'Validation Rule': '',
    'Validation Text': '',
    'Required': 'Yes',
    'Indexed': 'Yes (Duplicates OK)',
    'Text Align': 'General'
  }
  root.querySelector('tbody').innerHTML = Object.entries(props)
    .map(([name, value]) => `<tr><th scope="row">${name}</th><td>${value}</td></tr>`).join('')
})

define('status-bar', `
  <style>
    :host { display: flex; align-items: center; height: 20px; background: #f0f0f0; border-top: 1px solid #ababab; border-bottom: 2px solid #1e1e1e; }
    span { flex: 1; padding-left: 7px; white-space: pre; color: #444; }
    button { display: flex; align-items: center; justify-content: center; width: 39px; height: 20px; padding: 0 0 2px; border: 0; background: none; }
    .on { background: #c8c8c8; }
  </style>
  <span>Design view.  F6 = Switch panes.  F1 = Help.</span>
  <button type="button" aria-label="Datasheet view">${icon('datasheet')}</button>
  <button type="button" class="on" aria-label="Design view">${icon('design')}</button>
`)

define('access-app', `
  <style>
    :host { display: flex; flex-direction: column; height: 100%; }
    main { display: flex; flex: 1; min-height: 0; background: #f0f2f4; }
    .doc { display: flex; flex: 1; flex-direction: column; min-width: 0; margin-left: 4px; border-left: 1px solid #8e949c; background: #fff; }
    field-grid { flex: 215 1 0; }
    field-properties { flex: 267 1 0; }
  </style>
  <title-bar></title-bar>
  <ribbon-bar></ribbon-bar>
  <main>
    <nav-pane>
      <nav-item>Albums</nav-item>
      <nav-item>Artists</nav-item>
    </nav-pane>
    <section class="doc">
      <doc-tabs></doc-tabs>
      <field-grid></field-grid>
      <field-properties></field-properties>
    </section>
  </main>
  <status-bar></status-bar>
`)
</script>
</body>
</html>
